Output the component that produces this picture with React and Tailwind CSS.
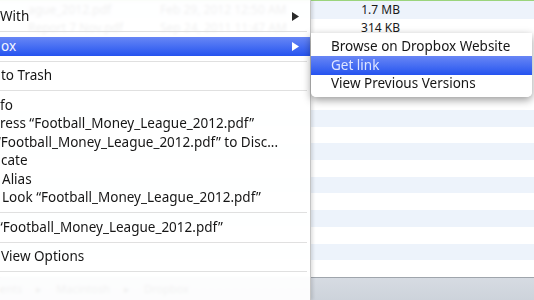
import React from "react";

function Arrow({ white }) {
  return (
    <svg width="7" height="9" viewBox="0 0 7 9" className="shrink-0">
      <path d="M0 0 L7 4.5 L0 9 Z" fill={white ? "#ffffff" : "#2a2a2a"} />
    </svg>
  );
}

function Sep() {
  return (
    <div className="h-[11px] flex items-center pr-[3px]">
      <div className="h-px w-full bg-[#e0e0e0]" />
    </div>
  );
}

function Item({ children, arrow, active, indent = "" }) {
  return (
    <div
      className={
        "h-[18.5px] flex items-center justify-between pr-[11px] whitespace-nowrap " +
        (active
          ? "bg-gradient-to-b from-[#6886f5] to-[#2552ef] text-[#f4f6ff]"
          : "text-[#161616]")
      }
    >
      <span className={indent}>{children}</span>
      {arrow && <Arrow white={active} />}
    </div>
  );
}

function BgRow({ blue, name, date, size, h = "h-[18px]" }) {
  return (
    <div
      className={
        h +
        " grid grid-cols-[160px_140px_100px_1fr] items-center text-[12px] text-[#1a1a1a] " +
        (blue ? "bg-[#edf3fb]" : "bg-white")
      }
    >
      <span className="pl-[28px] whitespace-nowrap">{name}</span>
      <span className="whitespace-nowrap">{date}</span>
      <span className="text-right whitespace-nowrap">{size}</span>
      <span />
    </div>
  );
}

export default function App() {
  const stripes = Array.from({ length: 10 }, (_, i) => i % 2 === 0);
  return (
    <div className="relative w-[534px] h-[300px] overflow-hidden bg-white font-['Noto_Sans',sans-serif]">
      {/* background Finder window */}
      <div className="flex flex-col h-full">
        <div className="h-px bg-[#9bd47c]" />
        <BgRow blue name="ague_2012.pdf" date="Feb 29, 2012 12:50 AM" size="1.7 MB" />
        <BgRow name="Report 7 Nov.pdf" date="Sep 24, 2011 11:47 AM" size="314 KB" />
        <div className="h-[73px] bg-white" />
        {stripes.map((b, i) => (
          <BgRow key={i} blue={b} h="h-[16.7px]" />
        ))}
        <div className="flex-1 border-t border-[#9fa5ac] bg-gradient-to-b from-[#d6dbe2] to-[#cdd3db] flex items-center gap-[14px] text-[11px] text-[#333] whitespace-nowrap">
          <span>ents</span>
          <span>▸</span>
          <span>Macintosh</span>
          <span>▸</span>
          <span>Dropbox</span>
        </div>
      </div>

      {/* context menu */}
      <div className="absolute left-0 top-0 w-[311px] h-[300px] bg-white/[0.93] backdrop-blur-[1.5px] border-r border-[#c4c4c4] shadow-[2px_0_3px_rgba(0,0,0,0.12)] overflow-hidden text-[13.5px] leading-none">
        <div className="flex flex-col pt-[7.5px]">
          <Item arrow>With</Item>
          <Sep />
          <Item arrow active indent="pl-[1px]">ox</Item>
          <Sep />
          <Item indent="pl-[1px]">to Trash</Item>
          <Sep />
          <Item>fo</Item>
          <Item>ress “Football_Money_League_2012.pdf”</Item>
          <Item indent="-ml-[4px]">“Football_Money_League_2012.pdf” to Disc...</Item>
          <Item indent="pl-[1px]">cate</Item>
          <Item indent="pl-[2px]">Alias</Item>
          <Item indent="pl-[2px]">Look “Football_Money_League_2012.pdf”</Item>
          <Sep />
          <Item indent="-ml-[2px]">“Football_Money_League_2012.pdf”</Item>
          <Sep />
          <Item indent="pl-[1px]">View Options</Item>
          <Sep />
        </div>
      </div>

      {/* Dropbox submenu */}
      <div className="absolute left-[311px] top-[33px] w-[221px] bg-white/[0.97] rounded-b-[5px] shadow-[0_3px_9px_rgba(0,0,0,0.4)] pt-[4.5px] pb-[4px] text-[13.5px] leading-none">
        <div className="h-[18.5px] flex items-center pl-[20px] text-[#161616] whitespace-nowrap">
          Browse on Dropbox Website
        </div>
        <div className="h-[18.5px] flex items-center pl-[20px] bg-gradient-to-b from-[#6886f5] to-[#2552ef] text-[#dfe6ff] whitespace-nowrap">
          Get link
        </div>
        <div className="h-[18.5px] flex items-center pl-[20px] text-[#161616] whitespace-nowrap">
          View Previous Versions
        </div>
      </div>
    </div>
  );
}
